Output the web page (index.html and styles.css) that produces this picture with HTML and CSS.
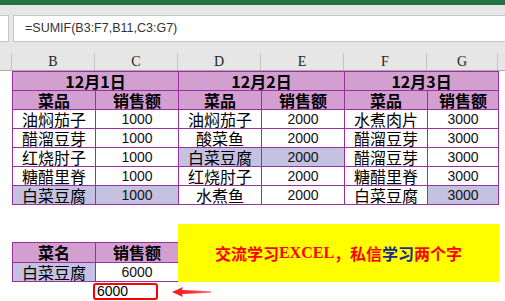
FILE: index.html
```html
<!DOCTYPE html>
<html>
<head>
<meta charset="utf-8">
<link rel="stylesheet" href="styles.css">
</head>
<body>
<div class="app">
  <div class="ribbon"></div>
  <div class="fbar">
    <div class="namebox"></div>
    <div class="formula">=SUMIF(B3:F7,B11,C3:G7)</div>
  </div>
  <div class="colhead">
    <div class="ch corner"></div>
    <div class="ch">B</div>
    <div class="ch">C</div>
    <div class="ch">D</div>
    <div class="ch">E</div>
    <div class="ch">F</div>
    <div class="ch last">G</div>
    <div class="ch rest"></div>
  </div>
  <div class="sheet">
    <table class="grid">
      <colgroup><col class="w83"><col class="w83"><col class="w83"><col class="w83"><col class="w83"><col class="w71"></colgroup>
      <tr class="hd"><td colspan="2">12月1日</td><td colspan="2">12月2日</td><td colspan="2">12月3日</td></tr>
      <tr class="hd"><td>菜品</td><td>销售额</td><td>菜品</td><td>销售额</td><td>菜品</td><td>销售额</td></tr>
      <tr><td>油焖茄子</td><td class="num">1000</td><td>油焖茄子</td><td class="num">2000</td><td>水煮肉片</td><td class="num">3000</td></tr>
      <tr><td>醋溜豆芽</td><td class="num">1000</td><td>酸菜鱼</td><td class="num">2000</td><td>醋溜豆芽</td><td class="num">3000</td></tr>
      <tr><td>红烧肘子</td><td class="num">1000</td><td class="hl">白菜豆腐</td><td class="num hl">2000</td><td>醋溜豆芽</td><td class="num">3000</td></tr>
      <tr><td>糖醋里脊</td><td class="num">1000</td><td>红烧肘子</td><td class="num">2000</td><td>糖醋里脊</td><td class="num">3000</td></tr>
      <tr><td class="hl">白菜豆腐</td><td class="num hl">1000</td><td>水煮鱼</td><td class="num">2000</td><td>白菜豆腐</td><td class="num hl">3000</td></tr>
    </table>
    <div class="lower">
      <table class="mini">
        <colgroup><col class="w83"><col class="w83"></colgroup>
        <tr class="hd tall"><td>菜名</td><td>销售额</td></tr>
        <tr><td class="hl">白菜豆腐</td><td class="num">6000</td></tr>
      </table>
      <div class="note">交流学习<span class="lat">EXCEL</span>，私信<span class="blue">学习</span>两个字</div>
    </div>
    <div class="result">
      <div class="pick">6000</div>
      <svg class="arrow" width="40" height="12" viewBox="0 0 40 12">
        <defs>
          <linearGradient id="ag" x1="0" y1="0" x2="1" y2="0">
            <stop offset="0" stop-color="#f01818"/>
            <stop offset="0.5" stop-color="#f23030"/>
            <stop offset="1" stop-color="#ff8080"/>
          </linearGradient>
        </defs>
        <polygon points="0,6 11,1 10,4 39,5.3 39,6.7 10,8 11,11" fill="url(#ag)"/>
      </svg>
    </div>
  </div>
</div>
</body>
</html>
```
FILE: styles.css
```css
html, body {
  margin: 0;
  padding: 0;
  background: #ffffff;
}
.app {
  width: 505px;
  height: 301px;
  overflow: hidden;
  font-family: "Noto Sans CJK SC", "Liberation Sans", sans-serif;
}
.ribbon {
  height: 5px;
  background: #217346;
}
.fbar {
  height: 48px;
  box-sizing: border-box;
  padding-top: 10px;
  background: #e6e6e6;
  display: flex;
  align-items: flex-start;
  gap: 4px;
}
.namebox {
  width: 9px;
  height: 27px;
  box-sizing: border-box;
  background: #ffffff;
  border: 1px solid #c6c6c6;
  border-left: none;
}
.formula {
  flex: 1;
  height: 27px;
  box-sizing: border-box;
  background: #ffffff;
  border: 1px solid #c6c6c6;
  border-right: none;
  padding-left: 11px;
  font-family: "Liberation Sans", Arial, sans-serif;
  font-size: 12.5px;
  line-height: 25px;
  color: #333333;
}
.colhead {
  height: 18px;
  display: flex;
  background: #e6e6e6;
  border-bottom: 1px solid #ababab;
  box-sizing: border-box;
}
.ch {
  width: 83px;
  box-sizing: border-box;
  border-right: 1px solid #c4c4c4;
  text-align: center;
  font-family: "Liberation Serif", serif;
  font-size: 14px;
  line-height: 18px;
  color: #222222;
}
.ch.corner { width: 12px; }
.ch.last { width: 71px; }
.ch.rest { flex: 1; border-right: none; }

.sheet {
  padding-left: 12px;
}
table {
  border-collapse: collapse;
  table-layout: fixed;
}
.grid { width: 486px; }
.mini { width: 166px; }
col.w83 { width: 83px; }
col.w71 { width: 71px; }
td {
  border: 1px solid #9a2f9f;
  height: 18px;
  padding: 0;
  text-align: center;
  font-size: 16px;
  line-height: 17px;
  color: #000000;
  white-space: nowrap;
}
.hd td {
  background: #d29fd0;
  font-weight: bold;
}
.tall td { height: 19px; }
td.num {
  font-family: "Liberation Sans", Arial, sans-serif;
  font-size: 14px;
  color: #111111;
}
td.hl { background: #c4c1e1; }

.lower {
  margin-top: 19px;
  display: flex;
  align-items: flex-end;
}
.note {
  width: 321px;
  height: 58px;
  margin-left: -1px;
  background: #ffff00;
  display: flex;
  align-items: center;
  justify-content: center;
  color: #ff0000;
  font-weight: bold;
  font-size: 16px;
}
.note .lat {
  font-family: "Liberation Serif", serif;
  font-size: 16px;
}
.note .blue { color: #1c2a8c; }

.result {
  display: flex;
  align-items: center;
  margin-top: 1px;
  padding-left: 81px;
}
.pick {
  width: 65px;
  height: 17px;
  box-sizing: border-box;
  border: 2px solid #ff0000;
  border-radius: 3px;
  padding-left: 2px;
  font-family: "Liberation Sans", Arial, sans-serif;
  font-size: 14px;
  line-height: 13px;
  color: #000000;
}
.arrow {
  margin-left: 14px;
  display: block;
}
```
